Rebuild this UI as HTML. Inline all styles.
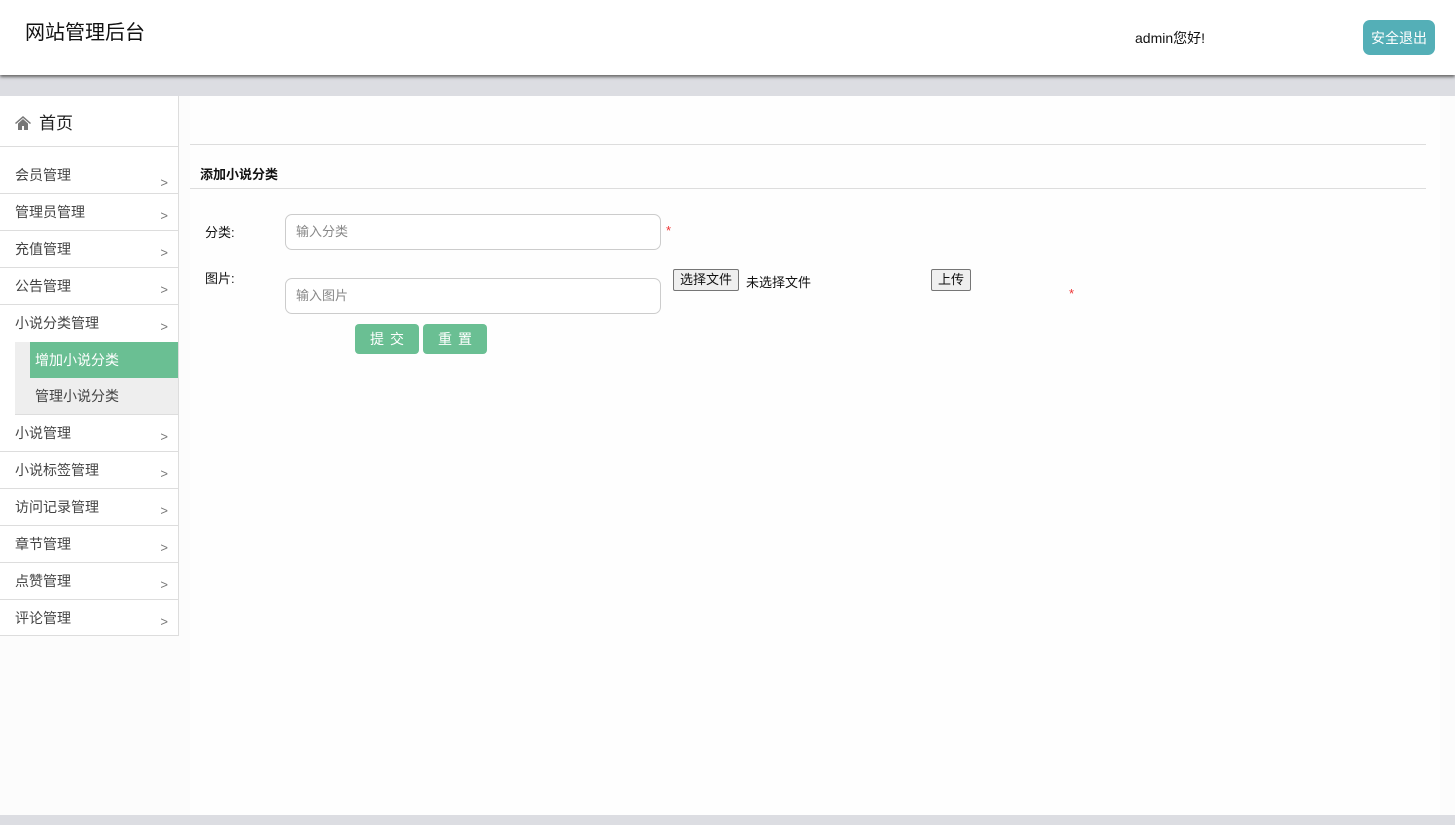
<!DOCTYPE html>
<html><head><meta charset="utf-8"><style>
*{margin:0;padding:0;box-sizing:border-box}
body{width:1455px;height:825px;overflow:hidden;background:#fcfcfc;font-family:"Liberation Sans","Noto Sans CJK SC",sans-serif;font-size:14px;color:#333;position:relative}
.hd{position:absolute;left:0;top:0;width:1455px;height:75px;background:#fff;box-shadow:0 2px 3px #666;z-index:2}
.hd .t{position:absolute;left:25px;top:16px;font-size:20px;color:#111}
.hd .u{position:absolute;left:1135px;top:28px;font-size:14px;color:#111}
.hd .b{position:absolute;left:1363px;top:20px;width:72px;height:35px;background:#54afb7;border-radius:7px;color:#fff;font-size:14px;text-align:center;line-height:36px}
.strip{position:absolute;left:0;top:75px;width:1455px;height:21px;background:#dcdde2}
.bot{position:absolute;left:0;top:815px;width:1455px;height:10px;background:#dcdde2}
.side{position:absolute;left:0;top:96px;width:179px;height:540px;background:#fff;border-right:1px solid #ddd;border-bottom:1px solid #ddd}
.home{height:51px;border-bottom:1px solid #ddd;padding:13px 0 0 15px;font-size:17px;color:#222}
.home svg{vertical-align:-1px;margin-right:8px}
.it{height:37px;border-bottom:1px solid #ddd;padding-left:15px;line-height:37px;color:#444;position:relative}
.it span{position:absolute;right:10px;top:3px;color:#777;font-size:13px}
.it.first{height:47px;line-height:56px}
.it.first span{top:8px}
.sub{background:#eee;margin-left:15px;border-bottom:1px solid #ddd}
.sub div{height:36px;line-height:36px;margin-left:15px;padding-left:5px;color:#444}
.sub .on{background:#6abf93;color:#fff}
.main{position:absolute;left:190px;top:96px;width:1250px;height:719px;background:#fefefe}
.l1{position:absolute;left:0;top:48px;width:1236px;border-top:1px solid #ddd}
.l2{position:absolute;left:0;top:92px;width:1236px;border-top:1px solid #ddd}
.ti{position:absolute;left:10px;top:68px;font-size:13px;font-weight:bold;color:#111}
.lab{position:absolute;font-size:13px;color:#111}
.inp{position:absolute;left:95px;width:376px;height:36px;border:1px solid #ccc;border-radius:7px;background:#fff;padding-left:10px;line-height:34px;color:#888;font-size:13px}
.star{position:absolute;color:#e33;font-size:13px}
.fb{position:absolute;border:1px solid #767676;background:#efefef;border-radius:2px;font-size:13px;color:#111;height:22px;line-height:20px;padding:0 6px}
.btn{position:absolute;top:228px;width:64px;height:30px;background:#6abf93;border-radius:4px;color:#fff;text-align:center;line-height:30px;font-size:14px;letter-spacing:6px;padding-left:6px}
</style></head><body>
<div class="hd"><div class="t">网站管理后台</div><div class="u">admin您好!</div><div class="b">安全退出</div></div>
<div class="strip"></div><div class="bot"></div>
<div class="side">
<div class="home"><svg width="16" height="14" viewBox="0 0 16 14"><path d="M8 0L0 7l1 1 7-6 7 6 1-1z M3 7.5V14h4v-4h2v4h4V7.5L8 3z" fill="#777"/></svg>首页</div>
<div class="it first">会员管理<span>&gt;</span></div>
<div class="it">管理员管理<span>&gt;</span></div>
<div class="it">充值管理<span>&gt;</span></div>
<div class="it">公告管理<span>&gt;</span></div>
<div class="it" style="border-bottom:none">小说分类管理<span>&gt;</span></div>
<div class="sub"><div class="on">增加小说分类</div><div>管理小说分类</div></div>
<div class="it">小说管理<span>&gt;</span></div>
<div class="it">小说标签管理<span>&gt;</span></div>
<div class="it">访问记录管理<span>&gt;</span></div>
<div class="it">章节管理<span>&gt;</span></div>
<div class="it">点赞管理<span>&gt;</span></div>
<div class="it" style="border-bottom:none">评论管理<span>&gt;</span></div>
</div>
<div class="main">
<div class="l1"></div><div class="ti">添加小说分类</div><div class="l2"></div>
<div class="lab" style="left:15px;top:126px">分类:</div>
<div class="inp" style="top:118px">输入分类</div>
<div class="star" style="left:476px;top:127px">*</div>
<div class="lab" style="left:15px;top:172px">图片:</div>
<div class="inp" style="top:182px">输入图片</div>
<div class="fb" style="left:483px;top:173px">选择文件</div>
<div class="lab" style="left:556px;top:176px">未选择文件</div>
<div class="fb" style="left:741px;top:173px">上传</div>
<div class="star" style="left:879px;top:190px">*</div>
<div class="btn" style="left:165px">提交</div>
<div class="btn" style="left:233px">重置</div>
</div>
</body></html>
